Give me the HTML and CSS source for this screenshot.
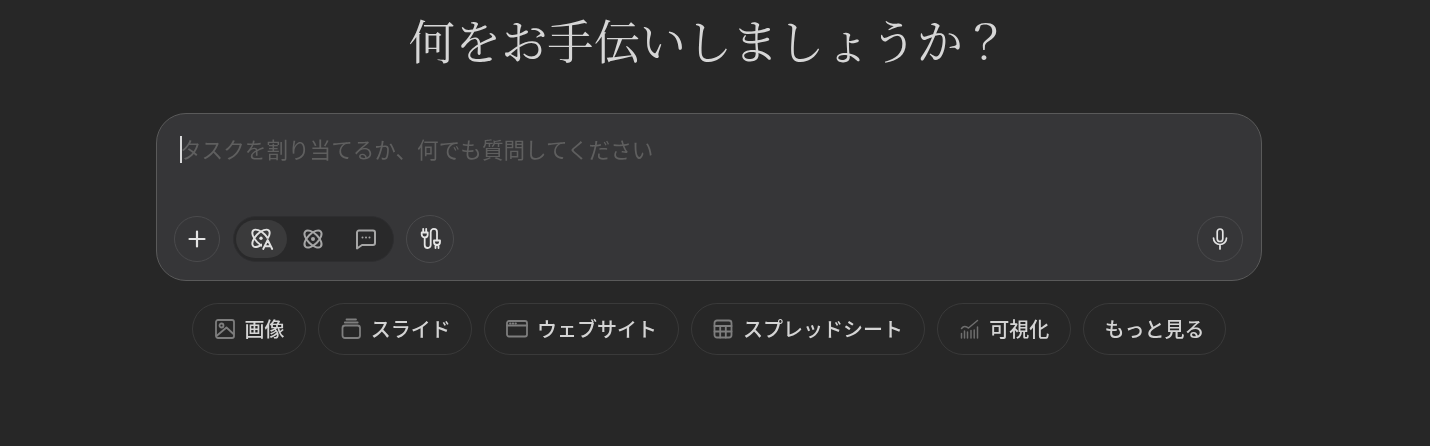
FILE: index.html
```html
<!DOCTYPE html>
<html lang="ja">
<head>
<meta charset="utf-8">
<title>何をお手伝いしましょうか？</title>
<link rel="stylesheet" href="styles.css">
</head>
<body>
<main class="page">
  <h1 class="title">何をお手伝いしましょうか？</h1>
  <section class="composer">
    <div class="prompt"><span class="caret"></span><span class="placeholder">タスクを割り当てるか、何でも質問してください</span></div>
    <div class="toolbar">
      <button class="round plus" aria-label="追加">
        <svg width="24" height="24" viewBox="0 0 24 24" class="ico-light"><path d="M12 4.500v15M4.500 12h15"/></svg>
      </button>
      <div class="modes">
        <button class="mode active" aria-label="エージェント翻訳">
          <svg width="24" height="24" viewBox="0 0 24 24" class="ico-thin">
            <defs><clipPath id="atom-cut"><path d="M0 0H24V11.500H12V24H0z"/></clipPath></defs>
            <g clip-path="url(#atom-cut)">
              <ellipse cx="11" cy="11.300" rx="11" ry="5.400" transform="rotate(45 11 11.300)"/>
              <ellipse cx="11" cy="11.300" rx="11" ry="5.400" transform="rotate(-45 11 11.300)"/>
            </g>
            <circle class="fill" cx="11" cy="11.300" r="1.700"/>
            <path d="M13.200 22l4.500-9 4.500 9M14.600 19.200h6.200"/>
          </svg>
        </button>
        <button class="mode" aria-label="エージェント">
          <svg width="24" height="24" viewBox="0 0 24 24" class="ico-dim"><ellipse cx="12" cy="12" rx="10.800" ry="5.400" transform="rotate(45 12 12)"/><ellipse cx="12" cy="12" rx="10.800" ry="5.400" transform="rotate(-45 12 12)"/><circle class="fill" cx="12" cy="12" r="2"/></svg>
        </button>
        <button class="mode" aria-label="チャット">
          <svg width="24" height="24" viewBox="0 0 24 24" class="ico-dim"><path d="M5 3.500h14a2 2 0 0 1 2 2v10.500a2 2 0 0 1-2 2H8L3 21.500V5.500a2 2 0 0 1 2-2z"/><circle class="fill" cx="8.500" cy="10.500" r="1"/><circle class="fill" cx="12" cy="10.500" r="1"/><circle class="fill" cx="15.500" cy="10.500" r="1"/></svg>
        </button>
      </div>
      <button class="round plug" aria-label="コネクタ">
        <svg width="24" height="24" viewBox="0 0 24 24" class="ico-light"><path d="M5.200 1.800v3.400M8.200 1.800v3.400M3.700 5.500h6v2a3 3 0 0 1-6 0zM6.700 10.500v7.500a3 3 0 0 0 6 0V5a3 3 0 0 1 6.300 0v8.500M16 13.500h6v1.500a3 3 0 0 1-6 0zM17.500 18v3M20.500 18v3"/></svg>
      </button>
      <button class="round mic" aria-label="音声入力">
        <svg width="24" height="24" viewBox="0 0 24 24" class="ico-mic"><rect x="9.200" y="2" width="5.600" height="12.500" rx="2.800"/><path d="M5.500 11a6.500 6.500 0 0 0 13 0M12 17.500V22"/></svg>
      </button>
    </div>
  </section>
  <nav class="chips">
    <a class="chip"><svg width="22" height="22" viewBox="0 0 22 22" class="chip-ico"><rect x="2" y="2" width="18" height="18" rx="2"/><circle cx="7.500" cy="7.500" r="2"/><path d="M2.500 18l10-8.500 7 6.500"/></svg><span>画像</span></a>
    <a class="chip"><svg width="22" height="22" viewBox="0 0 22 22" class="chip-ico"><rect x="2.500" y="7.500" width="17.500" height="12.500" rx="2.500"/><path d="M4.800 4.500h12.900M6.500 1.500h9.500"/></svg><span>スライド</span></a>
    <a class="chip"><svg width="22" height="22" viewBox="0 0 22 22" class="chip-ico"><rect x="1" y="3" width="20" height="15.500" rx="2"/><path d="M1 7.500h20M4 5.300h.6M6.700 5.300h.6M9.400 5.300h.6"/></svg><span>ウェブサイト</span></a>
    <a class="chip"><svg width="22" height="22" viewBox="0 0 22 22" class="chip-ico"><rect x="2.500" y="2.500" width="17" height="17" rx="2.500"/><path d="M2.500 8h17M2.500 13.500h17M8.200 8v11.500M13.800 8v11.500"/></svg><span>スプレッドシート</span></a>
    <a class="chip"><svg width="22" height="22" viewBox="0 0 22 22" class="chip-ico chart"><path d="M3.500 10.500c1.500-2 3-2.500 4.500-1.800l2.500 1.300 9-7.500M3.500 20v-4.500M6.500 20v-7M9.500 20v-6M13 20v-7.500M16.200 20v-8M19.500 20v-11"/></svg><span>可視化</span></a>
    <a class="chip"><span>もっと見る</span></a>
  </nav>
</main>
</body>
</html>
```
FILE: styles.css
```css
* { box-sizing: border-box; }
html, body { margin: 0; height: 100%; }
body {
  background: #272727;
  font-family: "Noto Sans CJK JP", "Liberation Sans", sans-serif;
  overflow: hidden;
}
.page {
  width: 1418px;
  display: flex;
  flex-direction: column;
  align-items: center;
  will-change: opacity;
}
.title {
  margin: 0;
  height: 113px;
  padding-top: 14px;
  font-family: "Liberation Serif", "Noto Serif CJK JP", serif;
  font-weight: 400;
  font-size: 46.200px;
  line-height: 60px;
  color: #d6d6d6;
  text-align: center;
}
.composer {
  width: 1106px;
  height: 168px;
  border: 1px solid #5a5a5a;
  border-radius: 30px;
  background: #363638;
  padding: 20px 17px 17px;
  display: flex;
  flex-direction: column;
  justify-content: space-between;
}
.prompt { display: flex; align-items: center; height: 30px; padding-left: 6px; }
.caret { width: 2px; height: 27px; background: #d8d8d8; margin-right: -2px; }
.placeholder { font-size: 21.600px; line-height: 30px; color: #5f5f5f; }
.toolbar { display: flex; align-items: center; gap: 12px; height: 48px; }
button { background: none; border: 0; padding: 0; display: flex; align-items: center; justify-content: center; }
.round { width: 48px; height: 48px; border: 1px solid #4a4a4c; border-radius: 50%; flex: none; }
.plus, .mic { width: 46px; height: 46px; }
.plus { margin-right: 1px; }
.mic { margin-left: auto; margin-right: 1px; }
.modes {
  display: flex;
  width: 161px;
  height: 46px;
  padding: 3px 1px 3px 2px;
  border-radius: 23px;
  background: #29292a;
  border: 1px solid #2e2e30;
}
.mode { flex: none; width: 52.500px; height: 38px; border-radius: 19px; }
.mode.active { background: #3a3a3b; width: 51px; }
svg { fill: none; stroke-linecap: round; stroke-linejoin: round; }
svg .fill { fill: currentColor; stroke: none; }
.ico-light { stroke: #e4e4e4; stroke-width: 1.800; }
.plus svg { stroke-width: 2.200; }
.ico-mic { stroke: #e4e4e4; stroke-width: 1.700; }
.ico-thin { stroke: #e0e0e0; stroke-width: 1.900; color: #e0e0e0; }
.ico-dim { stroke: #a6a6a6; stroke-width: 2; color: #a6a6a6; }
.chips { display: flex; gap: 12px; margin-top: 22px; }
.chip {
  height: 52px;
  display: flex;
  align-items: center;
  gap: 9px;
  padding: 0 20.600px 2px;
  border: 1px solid #3a3a3a;
  border-radius: 26px;
  font-size: 20px;
  font-weight: 500;
  color: #d4d4d4;
}
.chip-ico { stroke: #7e7e7e; stroke-width: 1.800; flex: none; margin-top: 2px; }
.chart { stroke: #6e6e6e; stroke-width: 1.500; }
```
